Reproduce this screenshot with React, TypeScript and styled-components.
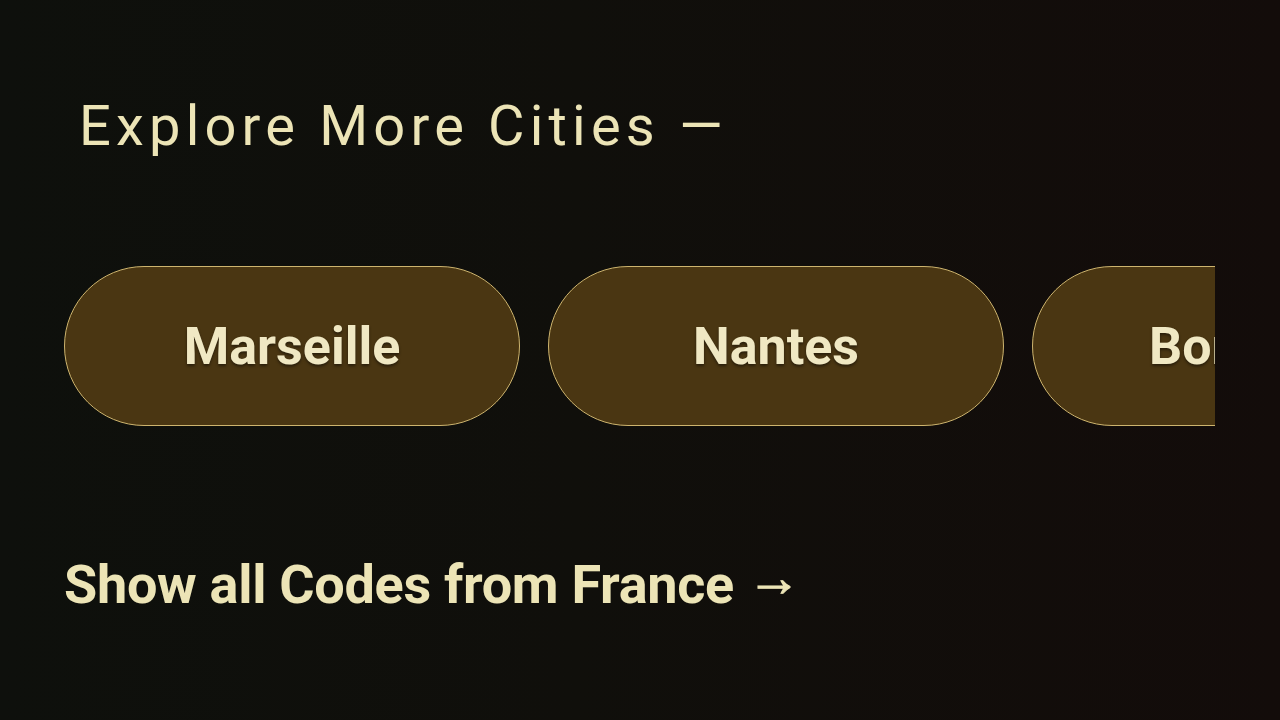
import React from "react";
import styled, { createGlobalStyle } from "styled-components";

const Global = createGlobalStyle`
  html, body { margin: 0; padding: 0; }
  body {
    width: 1280px;
    height: 720px;
    overflow: hidden;
    background: linear-gradient(90deg, #0e100c 0%, #100f0b 45%, #130c0a 100%);
    font-family: Roboto, "Noto Sans", sans-serif;
  }
`;

const Page = styled.main`
  box-sizing: border-box;
  width: 1280px;
  height: 720px;
  padding: 88px 0 0 64px;
  display: flex;
  flex-direction: column;
`;

const Heading = styled.h2`
  margin: 0 0 0 15px;
  font-weight: 400;
  font-size: 56px;
  line-height: 76px;
  letter-spacing: 5.2px;
  color: #ece4b6;
`;

const Strip = styled.div`
  margin-top: 102px;
  width: 1151px;
  overflow: hidden;
  display: flex;
  gap: 28px;
`;

const Pill = styled.a`
  flex: 0 0 auto;
  box-sizing: border-box;
  width: 456px;
  height: 160px;
  border-radius: 80px;
  border: 1.5px solid #cdb46e;
  background: #4a3612;
  display: flex;
  align-items: center;
  justify-content: center;
  font-weight: 700;
  font-size: 52px;
  padding-top: 1px;
  color: #f0e8c3;
  text-shadow: 0 2px 3px rgba(0, 0, 0, 0.45);
  text-decoration: none;
  white-space: nowrap;
`;

const ShowAll = styled.a`
  margin-top: 129px;
  font-weight: 700;
  font-size: 54px;
  line-height: 60px;
  color: #ece4b6;
  text-decoration: none;
  letter-spacing: -0.3px;
  white-space: nowrap;
`;

const Arrow = styled.span`
  line-height: 0;
  vertical-align: 7px;
  -webkit-text-stroke: 1px #ece4b6;
`;

const cities = ["Marseille", "Nantes", "Bordeaux"];

export default function App() {
  return (
    <>
      <Global />
      <Page>
        <Heading>Explore More Cities —</Heading>
        <Strip>
          {cities.map((c) => (
            <Pill key={c} href="#">
              {c}
            </Pill>
          ))}
        </Strip>
        <ShowAll href="#">
          Show all Codes from France <Arrow>→</Arrow>
        </ShowAll>
      </Page>
    </>
  );
}
